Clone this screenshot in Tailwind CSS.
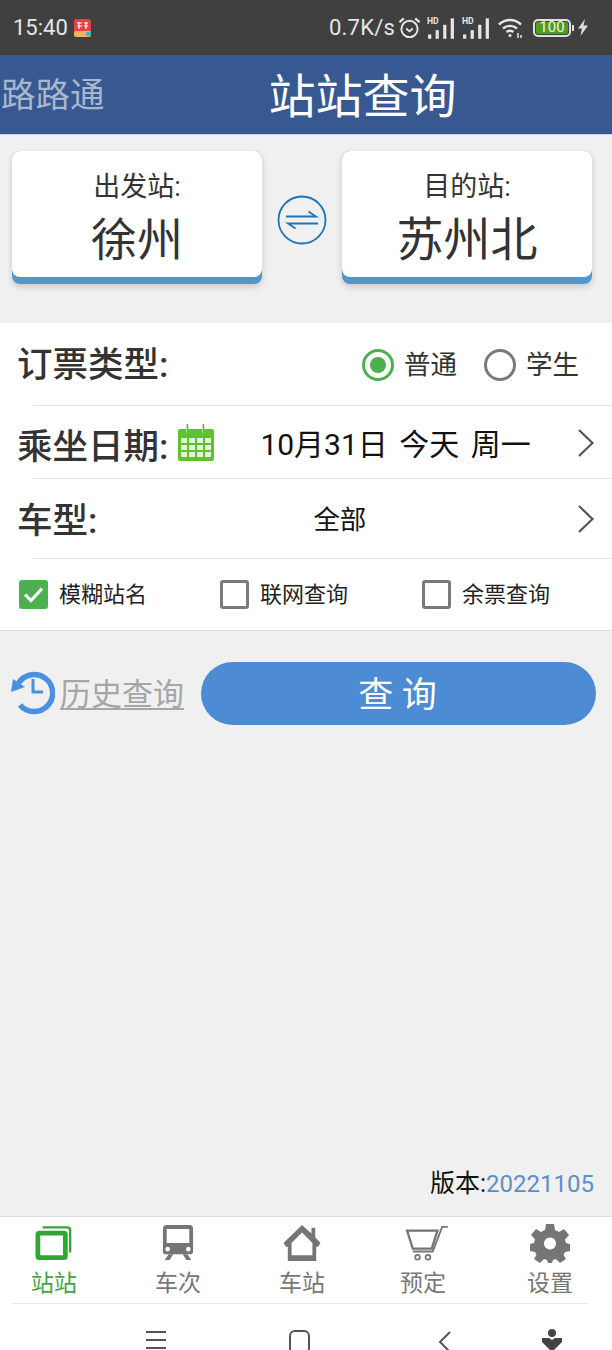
<!doctype html>
<html lang="zh">
<head>
<meta charset="utf-8">
<script src="https://cdn.jsdelivr.net/npm/@tailwindcss/browser@4"></script>
</head>
<body class="m-0">
<div class="w-[612px] h-[1350px] overflow-hidden flex flex-col bg-[#f0f0f0] font-['Roboto','Noto_Sans_CJK_SC',sans-serif]">

  <!-- status bar -->
  <div class="h-[55px] shrink-0 bg-[#404040] flex items-center pl-[13px] pr-[24px] text-[#e6e6e6]">
    <span class="text-[22px] leading-none">15:40</span>
    <svg class="ml-[5px]" width="19" height="18" viewBox="0 0 19 18"><rect x="1" width="17" height="18" rx="3" fill="#e8414a"/><rect x="1" y="12" width="17" height="6" rx="2" fill="#f0b35c"/><rect x="13" y="13" width="5" height="4" fill="#3bb8c4"/><path d="M4 4h5M4 7h5M6 3v7M11 4h4M13 3v7M11 7h4" stroke="#fff" stroke-width="1.2" fill="none"/></svg>
    <span class="ml-auto text-[22px] leading-none tracking-[0.2px]">0.7K/s</span>
    <svg class="ml-[3px]" width="23" height="24" viewBox="0 0 24 24" fill="none" stroke="#e6e6e6"><circle cx="12" cy="13" r="8.5" stroke-width="2"/><path d="M8.5 12.5 12 15.5 15.500 12.500" stroke-width="2"/><path d="M1.500 6 6 2M22.500 6 18 2" stroke-width="2.400"/></svg>
    <svg class="ml-[6px]" width="28" height="24" viewBox="0 0 26 22" fill="#e6e6e6"><text x="0" y="7" font-size="8" font-weight="700" font-family="Roboto">HD</text><rect x="1" y="17" width="3" height="4"/><rect x="8" y="13" width="3" height="8"/><rect x="15" y="8" width="3" height="13"/><rect x="22" y="2" width="3" height="19"/></svg>
    <svg class="ml-[7px]" width="28" height="24" viewBox="0 0 26 22" fill="#e6e6e6"><text x="0" y="7" font-size="8" font-weight="700" font-family="Roboto">HD</text><rect x="1" y="17" width="3" height="4"/><rect x="8" y="13" width="3" height="8"/><rect x="15" y="8" width="3" height="13"/><rect x="22" y="2" width="3" height="19"/></svg>
    <svg class="ml-[8px]" width="26" height="22" viewBox="0 0 26 22" fill="none" stroke="#e6e6e6" stroke-width="2.400"><path d="M1 7.500C7.500 1.500 16.500 1.500 23 7.500"/><path d="M5 11.500C9 8 15 8 19 11.500"/><path d="M8.500 15C10.500 13.500 13.500 13.500 15.500 15"/><circle cx="12" cy="18.500" r="1.500" fill="#e6e6e6" stroke="none"/><path d="M20 21v-5M23 21v-3" stroke-width="1.500"/></svg>
    <div class="ml-[9px] w-[38px] h-[18px] rounded-[5px] border-2 border-[#e0e0e0] p-[1px] flex">
      <div class="flex-1 rounded-[2px] bg-[#4f9e1f] flex items-center justify-center text-[15px] leading-none text-[#e8f5dc]">100</div>
    </div>
    <div class="ml-[1px] w-[2px] h-[6px] bg-[#e0e0e0]"></div>
    <svg class="ml-[4px]" width="10" height="17" viewBox="0 0 10 17" fill="#dcdcdc"><path d="M7 0 0 9.500h4L2.500 17 10 6.500H5.500Z"/></svg>
  </div>

  <!-- title bar -->
  <div class="relative h-[80px] shrink-0 bg-[#375891] border-b border-[#c9d3e3] flex items-center justify-center">
    <span class="absolute left-[1px] top-[18px] text-[34.500px] leading-[44px] text-[#a9b6cd]">路路通</span>
    <span class="ml-[113px] mt-[3px] text-[47px] leading-none text-white">站站查询</span>
  </div>

  <!-- stations -->
  <div class="h-[188px] shrink-0 flex items-start pt-[16px] pl-[12px] pr-[20px] justify-between">
    <div class="w-[250px] h-[133px] rounded-[8px] bg-[#4f97cc] shadow-[0_3px_6px_rgba(0,0,0,0.16)]">
      <div class="h-[126px] rounded-[8px] bg-white flex flex-col items-center text-[#333]">
        <span class="mt-[17px] text-[27px] leading-[38px]">出发站:</span>
        <span class="mt-[5px] text-[46px] leading-[58px]">徐州</span>
      </div>
    </div>
    <svg class="mt-[44px]" width="50" height="50" viewBox="0 0 50 50" fill="none" stroke="#1f74b5"><circle cx="25" cy="25" r="23.500" stroke-width="1.800"/><path d="M9 21.500H39L31.500 16.500" stroke-width="1.800"/><path d="M41 28.500H11L18.500 33.500" stroke-width="1.800"/></svg>
    <div class="w-[250px] h-[133px] rounded-[8px] bg-[#4f97cc] shadow-[0_3px_6px_rgba(0,0,0,0.16)]">
      <div class="h-[126px] rounded-[8px] bg-white flex flex-col items-center text-[#333]">
        <span class="mt-[17px] text-[27px] leading-[38px]">目的站:</span>
        <span class="mt-[5px] text-[47px] leading-[58px]">苏州北</span>
      </div>
    </div>
  </div>

  <!-- options -->
  <div class="h-[308px] shrink-0 bg-white border-b border-[#dcdcdc] flex flex-col">
    <div class="h-[82px] flex items-center pl-[17px] pr-[33px]">
      <span class="mt-[3px] text-[35.500px] leading-none font-medium text-[#333]">订票类型:</span>
      <div class="ml-auto mt-[2px] w-[32px] h-[32px] rounded-full border-[3px] border-[#4caf50] flex items-center justify-center">
        <div class="w-[16px] h-[16px] rounded-full bg-[#4caf50]"></div>
      </div>
      <span class="ml-[10px] mt-[2px] text-[26.500px] leading-none text-[#333]">普通</span>
      <div class="ml-[27px] mt-[2px] w-[32px] h-[32px] rounded-full border-[3px] border-[#7a7a7a]"></div>
      <span class="ml-[10px] mt-[2px] text-[26.500px] leading-none text-[#333]">学生</span>
    </div>
    <div class="h-[73px] ml-[33px] border-t border-[#e2e2e2] flex items-center pr-[17px]">
      <span class="-ml-[16px] mt-[12px] text-[35.500px] leading-none font-medium text-[#333]">乘坐日期:</span>
      <svg class="ml-[9px] mt-0" width="38" height="38" viewBox="0 0 38 38" fill="#5ec32f"><path d="M1 8a2 2 0 0 1 2-2h6v4h2V6h14v4h2V6h8a2 2 0 0 1 2 2v28a2 2 0 0 1-2 2H3a2 2 0 0 1-2-2Z"/><rect x="9.500" y="1" width="1.800" height="9"/><rect x="25.500" y="1" width="1.800" height="9"/><g fill="#e6f6de"><rect x="4" y="15" width="6" height="5"/><rect x="12" y="15" width="6" height="5"/><rect x="20" y="15" width="6" height="5"/><rect x="28" y="15" width="6" height="5"/><rect x="4" y="22" width="6" height="5"/><rect x="12" y="22" width="6" height="5"/><rect x="20" y="22" width="6" height="5"/><rect x="28" y="22" width="6" height="5"/><rect x="4" y="29" width="6" height="5"/><rect x="12" y="29" width="6" height="5"/><rect x="20" y="29" width="6" height="5"/><rect x="28" y="29" width="6" height="5"/></g></svg>
      <span class="ml-[45px] mt-[6px] text-[30px] leading-none text-[#111] whitespace-pre [word-spacing:4px]">10月31日 今天 周一</span>
      <svg class="ml-auto mt-[2px]" width="18" height="30" viewBox="0 0 18 30" fill="none" stroke="#555" stroke-width="2.200"><path d="M2 2 15.500 15 2 28"/></svg>
    </div>
    <div class="h-[80px] ml-[33px] border-t border-[#e2e2e2] flex items-center pr-[17px]">
      <span class="-ml-[16px] mt-[6px] text-[35.500px] leading-none font-medium text-[#333]">车型:</span>
      <span class="ml-[216px] mt-[4px] text-[26.500px] leading-none text-[#111]">全部</span>
      <svg class="ml-auto" width="18" height="30" viewBox="0 0 18 30" fill="none" stroke="#555" stroke-width="2.200"><path d="M2 2 15.500 15 2 28"/></svg>
    </div>
    <div class="h-px ml-[33px] bg-[#e2e2e2]"></div>
    <div class="flex-1 flex items-center pl-[19px]">
      <div class="w-[201px] flex items-center">
        <div class="w-[29px] h-[29px] rounded-[3px] bg-[#4caf50] flex items-center justify-center">
          <svg width="21" height="17" viewBox="0 0 21 17" fill="none" stroke="#fff" stroke-width="3.200"><path d="M2 8.500 8 14.500 19 2.500"/></svg>
        </div>
        <span class="ml-[11px] text-[22px] leading-none text-[#222]">模糊站名</span>
      </div>
      <div class="w-[202px] flex items-center">
        <div class="w-[29px] h-[29px] rounded-[3px] border-[3px] border-[#7a7a7a]"></div>
        <span class="ml-[11px] text-[22px] leading-none text-[#222]">联网查询</span>
      </div>
      <div class="flex items-center">
        <div class="w-[29px] h-[29px] rounded-[3px] border-[3px] border-[#7a7a7a]"></div>
        <span class="ml-[11px] text-[22px] leading-none text-[#222]">余票查询</span>
      </div>
    </div>
  </div>

  <!-- query row -->
  <div class="h-[95px] shrink-0 pt-[31px] pl-[10px] pr-[16px] flex items-start">
    <svg class="mt-[8px]" width="45" height="45" viewBox="0 0 45 45" fill="none" stroke="#4a8fe3"><path d="M8 14A18.500 18.500 0 1 1 10 35" stroke-width="5.500"/><path d="M1 22 3 9 15 17Z" fill="#4a8fe3" stroke="none"/><path d="M23 9V22H33" stroke-width="3"/></svg>
    <span class="ml-[5px] mt-[15px] text-[31px] leading-[36px] text-[#a6a6a6] underline underline-offset-[3px] decoration-2">历史查询</span>
    <div class="ml-auto w-[395px] h-[63px] pt-[3px] pr-[2px] rounded-full bg-[#4d8bd4] flex items-center justify-center text-white text-[35px] leading-none whitespace-pre">查 询</div>
  </div>

  <!-- spacer & version -->
  <div class="flex-1 flex items-end justify-end pr-[18px] pb-[16px]">
    <span class="text-[25px] leading-[32px] text-[#111]">版本:<span class="text-[24px] text-[#5b8fc9]">20221105</span></span>
  </div>

  <!-- tabs -->
  <div class="h-[87px] shrink-0 bg-white border-t border-[#dedede] flex gap-4">
    <div class="w-[108px] flex flex-col items-center">
      <svg class="mt-[8px]" width="40" height="36" viewBox="0 0 40 38" fill="none" stroke="#32a632"><path d="M8 2.500H34a3 3 0 0 1 3 3V29" stroke-width="2.500"/><rect x="3" y="8.500" width="29" height="26" rx="1.500" stroke-width="5"/></svg>
      <span class="mt-[9px] text-[23px] leading-[28px] text-[#3fa83f]">站站</span>
    </div>
    <div class="w-[108px] flex flex-col items-center">
      <svg class="mt-[8px]" width="32" height="36" viewBox="0 0 34 38" fill="#757575"><path fill-rule="evenodd" d="M5 0H29a4 4 0 0 1 4 4V28a3 3 0 0 1-3 3H4a3 3 0 0 1-3-3V4a4 4 0 0 1 4-4ZM5 4V19H29V4ZM6 23a2.500 2.500 0 1 0 .01 0ZM28 23a2.500 2.500 0 1 0 .01 0Z"/><path d="M7 31h5l-4 6H3ZM22 31h5l4 6h-5Z"/></svg>
      <span class="mt-[9px] text-[23px] leading-[28px] text-[#777]">车次</span>
    </div>
    <div class="w-[108px] flex flex-col items-center">
      <svg class="mt-[8px]" width="38" height="36" viewBox="0 0 40 38" fill="#757575"><path fill-rule="evenodd" d="M20 0 30 9V3H34V13L39.500 19 37 23H35V38H5V23H3L.5 19ZM20 8 9 19V32H31V19Z"/></svg>
      <span class="mt-[9px] text-[23px] leading-[28px] text-[#777]">车站</span>
    </div>
    <div class="w-[108px] flex flex-col items-center">
      <svg class="mt-[8px] ml-[2px]" width="44" height="36" viewBox="0 0 44 38" fill="none" stroke="#757575" stroke-width="2.400"><path d="M1 6H33L27 25H7Z"/><path d="M7 28H28L38 2H44" stroke-width="2"/><circle cx="12" cy="34" r="2.500" stroke-width="1.800"/><circle cx="23" cy="34" r="2.500" stroke-width="1.800"/></svg>
      <span class="mt-[9px] mr-[6px] text-[23px] leading-[28px] text-[#777]">预定</span>
    </div>
    <div class="w-[108px] flex flex-col items-center">
      <svg class="mt-[7px]" width="40" height="39" viewBox="0 0 40 39" fill="#757575"><path fill-rule="evenodd" d="M16 0H24L25 6 29 8 34 5 39 11 35 15.500 36 19 40 20V27L35 28 33.500 31 36 35 30 39 26 35 23 36 22 39H18L17 36 14 35 10 39 4 35 6.500 31 5 28 0 27V20L4 19 5 15.500 1 11 6 5 11 8 15 6ZM20 13.500a6 6 0 1 0 .01 0Z"/></svg>
      <span class="mt-[7px] text-[23px] leading-[28px] text-[#777]">设置</span>
    </div>
  </div>

  <!-- nav bar -->
  <div class="h-[47px] shrink-0 bg-white relative">
    <div class="h-px ml-[12px] mr-[24px] bg-[#e8e8e8]"></div>
    <svg class="absolute left-[145px] top-[27px]" width="22" height="20" viewBox="0 0 22 20" fill="none" stroke="#555" stroke-width="2"><path d="M1 2H21M1 10H21M1 18H21"/></svg>
    <div class="absolute left-[289px] top-[27px] w-[21px] h-[24px] rounded-[6px] border-2 border-[#555]"></div>
    <svg class="absolute left-[438px] top-[27px]" width="14" height="24" viewBox="0 0 14 24" fill="none" stroke="#555" stroke-width="2"><path d="M12 2 2 12 12 22"/></svg>
    <svg class="absolute left-[541px] top-[25px]" width="22" height="26" viewBox="0 0 22 26" fill="#444"><circle cx="11" cy="5" r="4"/><path d="M1 10H8L11 12 14 10H21V14L11 24 1 14Z"/></svg>
  </div>
</div>
</body>
</html>
